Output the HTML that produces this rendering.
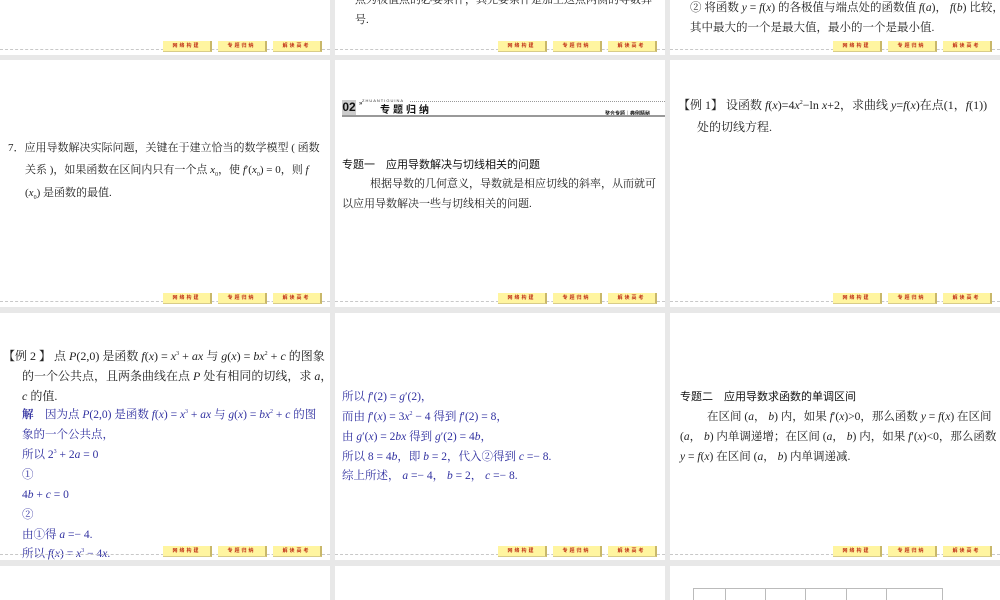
<!DOCTYPE html>
<html style="overflow:hidden;height:600px"><head><meta charset="utf-8">
<style>
body{margin:0;width:1000px;height:600px;background:#e8e8e8;position:relative;overflow:hidden;font-family:"Liberation Serif","Noto Serif CJK SC",serif;color:#222}
.s{position:absolute;background:#fff;width:330px;height:247px;overflow:hidden}
.t{position:absolute;white-space:nowrap;font-size:11.5px;line-height:14px}
.n{font-size:11px}
.b{color:#3030a0}
.h{font-family:"Liberation Sans","Noto Sans CJK SC",sans-serif;color:#111;font-size:11px}
.dash{position:absolute;left:0;width:330px;bottom:5px;border-top:1px dashed #c8c8c8}
.btn{position:absolute;bottom:3px;width:47px;height:10px;background:#fff5a0;border-right:2px solid #c9b86a;border-bottom:1px solid #d8cc88;font-family:"Liberation Sans","Noto Sans CJK SC",sans-serif;font-size:5px;line-height:10px;text-align:center;color:#c03018;letter-spacing:2px;font-weight:bold}
i{font-style:italic}
sub,sup{font-size:6px;line-height:0}
</style></head><body>

<!-- Row 1 -->
<div class="s" style="left:0;top:-192px"><div class="dash"></div><div class="btn" style="left:163px">网络构建</div><div class="btn" style="left:218px">专题归纳</div><div class="btn" style="left:273px">解读高考</div></div>
<div class="s" style="left:335px;top:-192px">
<div class="t n" style="left:20px;top:185px">点为极值点的必要条件，其充要条件是加上这点两侧的导数异</div>
<div class="t n" style="left:20px;top:205px">号.</div>
<div class="dash"></div><div class="btn" style="left:163px">网络构建</div><div class="btn" style="left:218px">专题归纳</div><div class="btn" style="left:273px">解读高考</div></div>
<div class="s" style="left:670px;top:-192px">
<div class="t" style="left:20px;top:193px">② 将函数 <i>y</i> = <i>f</i>(<i>x</i>) 的各极值与端点处的函数值 <i>f</i>(<i>a</i>)， <i>f</i>(<i>b</i>) 比较，</div>
<div class="t" style="left:20px;top:213px">其中最大的一个是最大值，最小的一个是最小值.</div>
<div class="dash"></div><div class="btn" style="left:163px">网络构建</div><div class="btn" style="left:218px">专题归纳</div><div class="btn" style="left:273px">解读高考</div></div>

<!-- Row 2 -->
<div class="s" style="left:0;top:60px">
<div class="t n" style="left:8px;top:81px">7．应用导数解决实际问题，关键在于建立恰当的数学模型 ( 函数</div>
<div class="t n" style="left:25px;top:103px">关系 )，如果函数在区间内只有一个点 <i>x</i><sub>0</sub>，使 <i>f</i>′(<i>x</i><sub>0</sub>) = 0，则 <i>f</i></div>
<div class="t n" style="left:25px;top:126px">(<i>x</i><sub>0</sub>) 是函数的最值.</div>
<div class="dash"></div><div class="btn" style="left:163px">网络构建</div><div class="btn" style="left:218px">专题归纳</div><div class="btn" style="left:273px">解读高考</div></div>
<div class="s" style="left:335px;top:60px">
<div style="position:absolute;left:7px;top:40px;width:14px;height:15px;background:#ccc;font:bold 12px/15px 'Liberation Sans',sans-serif;color:#111;text-align:center">02</div>
<div style="position:absolute;left:24px;top:41px;font:bold 6px 'Liberation Sans',sans-serif;color:#333">»</div>
<div style="position:absolute;left:27px;top:38px;font:4px 'Liberation Sans',sans-serif;color:#333;letter-spacing:1px">ZHUANTIGUINA</div>
<div style="position:absolute;left:75px;top:41px;width:255px;border-top:1px dotted #999"></div>
<div class="t h" style="left:45px;top:44px;font-weight:bold;letter-spacing:3px;font-size:10px">专题归纳</div>
<div class="t h" style="left:270px;top:47px;font-size:5px;font-weight:bold">整合专题｜典例精秘</div>
<div style="position:absolute;left:7px;top:55px;width:323px;border-top:2px solid #999"></div>
<div class="t h" style="left:7px;top:98px">专题一　应用导数解决与切线相关的问题</div>
<div class="t n" style="left:35px;top:117px">根据导数的几何意义，导数就是相应切线的斜率，从而就可</div>
<div class="t n" style="left:7px;top:137px">以应用导数解决一些与切线相关的问题.</div>
<div class="dash"></div><div class="btn" style="left:163px">网络构建</div><div class="btn" style="left:218px">专题归纳</div><div class="btn" style="left:273px">解读高考</div></div>
<div class="s" style="left:670px;top:60px">
<div class="t" style="left:8px;top:38px;font-size:12px">【例 1】 设函数 <i>f</i>(<i>x</i>)=4<i>x</i><sup>2</sup>−ln <i>x</i>+2，求曲线 <i>y</i>=<i>f</i>(<i>x</i>)在点(1，<i>f</i>(1))</div>
<div class="t" style="left:27px;top:60px;font-size:12px">处的切线方程.</div>
<div class="dash"></div><div class="btn" style="left:163px">网络构建</div><div class="btn" style="left:218px">专题归纳</div><div class="btn" style="left:273px">解读高考</div></div>

<!-- Row 3 -->
<div class="s" style="left:0;top:313px">
<div class="t" style="left:3px;top:36px;font-size:12px">【例 2 】 点 <i>P</i>(2,0) 是函数 <i>f</i>(<i>x</i>) = <i>x</i><sup>3</sup> + <i>ax</i> 与 <i>g</i>(<i>x</i>) = <i>bx</i><sup>2</sup> + <i>c</i> 的图象</div>
<div class="t" style="left:22px;top:56px;font-size:12px">的一个公共点，且两条曲线在点 <i>P</i> 处有相同的切线，求 <i>a</i>， <i>b</i>，</div>
<div class="t" style="left:22px;top:76px;font-size:12px"><i>c</i> 的值.</div>
<div class="t b" style="left:22px;top:95px"><b>解</b>　因为点 <i>P</i>(2,0) 是函数 <i>f</i>(<i>x</i>) = <i>x</i><sup>3</sup> + <i>ax</i> 与 <i>g</i>(<i>x</i>) = <i>bx</i><sup>2</sup> + <i>c</i> 的图</div>
<div class="t b" style="left:22px;top:115px">象的一个公共点，</div>
<div class="t b" style="left:22px;top:135px">所以 2<sup>3</sup> + 2<i>a</i> = 0</div>
<div class="t b" style="left:22px;top:155px">①</div>
<div class="t b" style="left:22px;top:175px">4<i>b</i> + <i>c</i> = 0</div>
<div class="t b" style="left:22px;top:195px">②</div>
<div class="t b" style="left:22px;top:215px">由①得 <i>a</i> =− 4.</div>
<div class="t b" style="left:22px;top:234px">所以 <i>f</i>(<i>x</i>) = <i>x</i><sup>3</sup> − 4<i>x</i>.</div>
<div class="dash"></div><div class="btn" style="left:163px">网络构建</div><div class="btn" style="left:218px">专题归纳</div><div class="btn" style="left:273px">解读高考</div></div>
<div class="s" style="left:335px;top:313px">
<div class="t b" style="left:7px;top:77px">所以 <i>f</i>′(2) = <i>g</i>′(2)，</div>
<div class="t b" style="left:7px;top:97px">而由 <i>f</i>′(<i>x</i>) = 3<i>x</i><sup>2</sup> − 4 得到 <i>f</i>′(2) = 8，</div>
<div class="t b" style="left:7px;top:117px">由 <i>g</i>′(<i>x</i>) = 2<i>bx</i> 得到 <i>g</i>′(2) = 4<i>b</i>，</div>
<div class="t b" style="left:7px;top:137px">所以 8 = 4<i>b</i>，即 <i>b</i> = 2，代入②得到 <i>c</i> =− 8.</div>
<div class="t b" style="left:7px;top:156px">综上所述， <i>a</i> =− 4， <i>b</i> = 2， <i>c</i> =− 8.</div>
<div class="dash"></div><div class="btn" style="left:163px">网络构建</div><div class="btn" style="left:218px">专题归纳</div><div class="btn" style="left:273px">解读高考</div></div>
<div class="s" style="left:670px;top:313px">
<div class="t h" style="left:10px;top:77px">专题二　应用导数求函数的单调区间</div>
<div class="t" style="left:37px;top:97px">在区间 (<i>a</i>， <i>b</i>) 内，如果 <i>f</i>′(<i>x</i>)&gt;0，那么函数 <i>y</i> = <i>f</i>(<i>x</i>) 在区间</div>
<div class="t" style="left:10px;top:117px">(<i>a</i>， <i>b</i>) 内单调递增；在区间 (<i>a</i>， <i>b</i>) 内，如果 <i>f</i>′(<i>x</i>)&lt;0，那么函数</div>
<div class="t" style="left:10px;top:137px"><i>y</i> = <i>f</i>(<i>x</i>) 在区间 (<i>a</i>， <i>b</i>) 内单调递减.</div>
<div class="dash"></div><div class="btn" style="left:163px">网络构建</div><div class="btn" style="left:218px">专题归纳</div><div class="btn" style="left:273px">解读高考</div></div>

<!-- Row 4 -->
<div class="s" style="left:0;top:566px;height:34px"></div>
<div class="s" style="left:335px;top:566px;height:34px"></div>
<div class="s" style="left:670px;top:566px;height:34px">
<div style="position:absolute;left:23px;top:22px;width:248px;height:40px;border:1px solid #bbb"></div>
<div style="position:absolute;left:55px;top:22px;height:40px;border-left:1px solid #bbb"></div>
<div style="position:absolute;left:95px;top:22px;height:40px;border-left:1px solid #bbb"></div>
<div style="position:absolute;left:135px;top:22px;height:40px;border-left:1px solid #bbb"></div>
<div style="position:absolute;left:176px;top:22px;height:40px;border-left:1px solid #bbb"></div>
<div style="position:absolute;left:216px;top:22px;height:40px;border-left:1px solid #bbb"></div>
</div>
</body></html>
